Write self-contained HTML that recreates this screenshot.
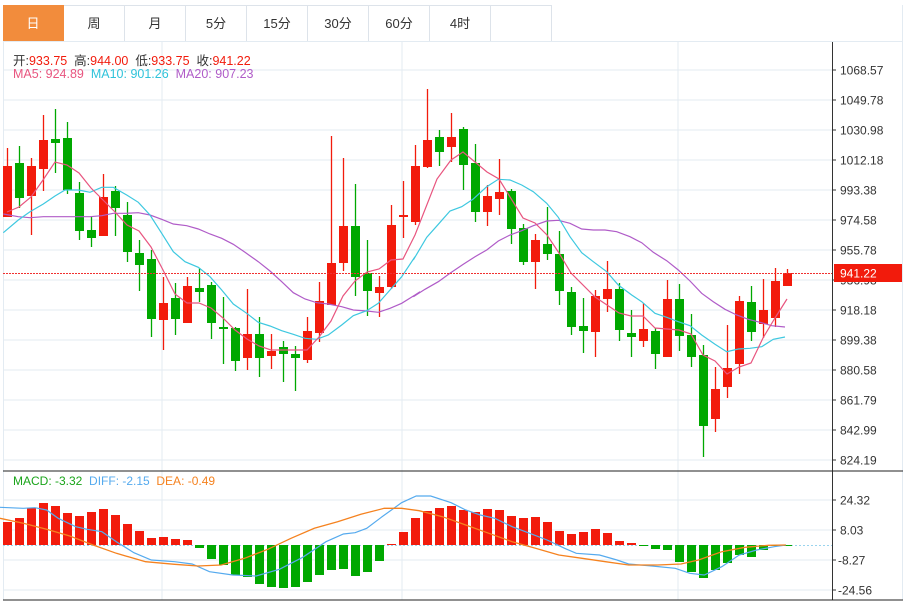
<!DOCTYPE html>
<html><head><meta charset="utf-8">
<style>
html,body{margin:0;padding:0;background:#fff;width:908px;height:602px;overflow:hidden;font-family:"Liberation Sans","Noto Sans CJK SC",sans-serif;}
#tabs{position:absolute;left:3px;top:5px;height:36px;}
.tab{position:absolute;top:0;width:61px;height:36px;border-right:1px solid #dde3ea;border-top:1px solid #dde3ea;box-sizing:border-box;text-align:center;line-height:35px;font-size:13px;color:#333;}
.on{background:#f28c3c;color:#fff;border-color:#f28c3c;}
svg{position:absolute;left:0;top:0;}
.info{position:absolute;left:13px;font-size:12.5px;white-space:pre;}
</style></head><body>
<div id="tabs">
<div class="tab on" style="left:0">日</div>
<div class="tab" style="left:61px">周</div>
<div class="tab" style="left:122px">月</div>
<div class="tab" style="left:183px">5分</div>
<div class="tab" style="left:244px">15分</div>
<div class="tab" style="left:305px">30分</div>
<div class="tab" style="left:366px">60分</div>
<div class="tab" style="left:427px">4时</div>
<div class="tab" style="left:488px">&nbsp;</div>
</div>
<svg id="s" width="908" height="602" xmlns="http://www.w3.org/2000/svg"></svg>
<div class="info" style="top:50px;color:#333">开:<span style="color:#f21b0c">933.75</span>  高:<span style="color:#f21b0c">944.00</span>  低:<span style="color:#f21b0c">933.75</span>  收:<span style="color:#f21b0c">941.22</span></div>
<div class="info" style="top:67px"><span style="color:#e8557f">MA5: 924.89</span>  <span style="color:#2fc3da">MA10: 901.26</span>  <span style="color:#b05cc8">MA20: 907.23</span></div>
<div class="info" style="top:474px;font-size:12px"><span style="color:#1aa41a">MACD: -3.32</span>  <span style="color:#55aaee">DIFF: -2.15</span>  <span style="color:#f5821f">DEA: -0.49</span></div>
<script>
var R='#f21b0c',G='#00a800';
var C=[[7,R,166,217,148,217],[19,G,163,198,146,208],[31,R,166,196,158,235],[43,R,140,169,115,191],[55,G,139,143,109,173],[67,G,138,190,122,194],[79,G,193,231,182,240],[91,G,230,238,216,247],[103,R,197,236,174,236],[115,G,191,208,186,236],[127,G,215,252,202,262],[139,G,253,265,240,291],[151,G,259,319,250,337],[163,R,303,320,277,350],[175,G,298,319,283,335],[187,R,286,323,277,323],[199,G,288,292,268,302],[211,G,285,323,282,339],[223,G,327,329,297,364],[235,G,328,361,327,371],[247,R,334,358,289,370],[259,G,334,358,317,377],[271,R,351,356,334,369],[283,G,347,354,341,382],[295,G,354,358,346,391],[307,R,331,360,317,363],[319,R,301,333,282,342],[331,R,263,305,136,305],[343,R,226,263,158,271],[355,G,226,277,184,296],[367,G,273,291,240,316],[379,R,287,293,276,317],[391,R,225,287,205,289],[403,R,215,217,181,238],[415,R,166,222,145,225],[427,R,140,167,89,168],[439,G,137,152,130,166],[451,R,137,147,113,162],[463,G,129,165,127,190],[475,G,163,212,144,222],[487,R,196,212,185,226],[499,R,192,199,159,215],[511,G,191,229,189,244],[523,G,228,262,224,265],[535,R,240,262,234,289],[547,G,244,254,207,260],[559,G,254,291,231,305],[571,G,292,327,287,335],[583,G,326,331,298,353],[595,R,296,332,290,357],[607,R,289,299,261,312],[619,G,289,330,283,341],[631,G,333,337,310,357],[643,R,329,341,303,347],[655,G,331,354,328,369],[667,R,299,357,280,357],[679,G,299,336,284,351],[691,G,335,357,314,367],[703,G,355,426,345,457],[715,R,389,419,367,432],[727,R,368,387,325,398],[739,R,301,364,296,374],[751,G,302,332,286,341],[763,R,310,324,279,338],[775,R,281,318,268,327],[787,R,273,286,269,286]];
var M=[522,518,508,503,506,513,516,512,509,515,524,531,538,537,539,540,548,559,565,575,577,584,587,588,587,582,575,570,569,576,572,561,544,532,518,511,508,506,510,512,509,510,516,518,517,522,531,534,532,529,533,541,543,546,549,550,562,572,578,570,563,555,557,550,546,545.5];
function pts(a,dx,dy,sx,sy){var o=[];for(var i=0;i<a.length;i+=2)o.push((dx+a[i]/sx).toFixed(1)+','+(dy+a[i+1]/sy).toFixed(1));return o.join(' ');}
var h='';
var gy=[70,100,130,160,190,220,250,280,310,340,370,400,430,460];
gy.forEach(function(y){h+='<line x1="3" x2="832" y1="'+y+'" y2="'+y+'" stroke="#e3ebf2"/>';h+='<line x1="832" x2="836" y1="'+y+'" y2="'+y+'" stroke="#333"/>';});
[500,530,560,590].forEach(function(y){h+='<line x1="3" x2="832" y1="'+y+'" y2="'+y+'" stroke="#e3ebf2"/><line x1="832" x2="836" y1="'+y+'" y2="'+y+'" stroke="#333"/>';});
[162,402,678].forEach(function(x){h+='<line x1="'+x+'" x2="'+x+'" y1="42" y2="600" stroke="#e3ebf2"/>';});
h+='<line x1="3.5" x2="3.5" y1="42" y2="600" stroke="#e3ebf2"/>';
h+='<line x1="3" x2="903" y1="41.5" y2="41.5" stroke="#e3ebf2"/><line x1="902.5" x2="902.5" y1="5" y2="600" stroke="#e3ebf2"/>';
h+='<line x1="832.5" x2="832.5" y1="42" y2="600" stroke="#333"/>';
h+='<line x1="3" x2="903" y1="471" y2="471" stroke="#222"/><line x1="3" x2="903" y1="600" y2="600" stroke="#222"/>';
var L=['1068.57','1049.78','1030.98','1012.18','993.38','974.58','955.78','936.98','918.18','899.38','880.58','861.79','842.99','824.19'];
L.forEach(function(t,i){h+='<text x="840" y="'+(gy[i]+4.5)+'" font-size="12" fill="#333" font-family="Liberation Sans">'+t+'</text>';});
['24.32','8.03','-8.27','-24.56'].forEach(function(t,i){h+='<text x="'+(t[0]=='-'?838:840)+'" y="'+(504.5+30*i)+'" font-size="12" fill="#333" font-family="Liberation Sans">'+t+'</text>';});
C.forEach(function(c){h+='<line x1="'+c[0]+'.5" x2="'+c[0]+'.5" y1="'+c[4]+'" y2="'+c[5]+'" stroke="'+c[1]+'" stroke-width="1.3"/>';h+='<rect x="'+(c[0]-4)+'" y="'+c[2]+'" width="9" height="'+Math.max(2,c[3]-c[2])+'" fill="'+c[1]+'"/>';});
h+='<polyline fill="none" stroke="#b05cc8" stroke-width="1.2" points="'+pts([10,402,55,410,90,413,130,410,200,410,270,410,305,407,340,400,380,400,415,398,450,405,485,418,520,432,560,437,595,447,630,462,665,475,700,493,735,517,775,545,810,573,845,605,880,638,915,657,950,668,985,672,1025,680,1060,690,1100,693,1135,697,1170,685,1205,670,1245,645,1260,635],0,80,3,3)+' '+pts([40,650,75,628,115,605,150,580,190,553,225,530,260,510,295,483,330,465,365,452,400,437,440,423,475,421,510,430,545,447,580,450,615,450,650,455,690,470,725,488,760,517,800,542,835,570,870,603,905,640,940,665,975,688,1010,705,1045,718,1080,727,1115,737,1155,741],400,80,3,3)+'"/>';
h+='<polyline fill="none" stroke="#3ec8e0" stroke-width="1.2" points="'+pts([10,458,55,420,90,395,130,372,165,348,195,330,235,330,270,337,305,322,340,322,380,345,415,367,450,405,485,460,520,515,555,545,595,562,630,590,665,630,700,672,740,700,775,727,810,738,845,752,880,763,915,775,950,778,985,765,1025,735,1060,707,1100,692,1135,670,1170,630,1205,590,1245,530],0,80,3,3)+' '+pts([40,540,80,472,115,433,150,393,185,380,220,357,260,320,295,298,330,300,365,315,400,335,440,370,475,412,510,470,545,518,580,545,620,575,655,615,695,645,725,665,765,700,800,712,835,725,870,737,905,765,945,793,980,815,1015,807,1050,805,1085,800,1120,778,1155,771],400,80,3,3)+'"/>';
var m5=[[7,212],[19,207],[31,197],[43,180],[55,162],[67,165],[79,173],[91,188],[103,200],[115,212],[127,225],[139,231],[151,247],[163,270],[175,294],[187,303],[199,303],[211,308],[223,318],[235,330],[247,339],[259,346],[271,350],[283,350],[295,350],[307,350],[319,337],[331,321],[343,296],[355,281],[367,272],[379,269],[391,260],[403,259],[415,235],[437,179],[451,160],[463,152],[487,172],[499,179],[523,218],[535,223],[547,235],[559,253],[571,273],[595,297],[607,305],[619,313],[631,316],[643,316],[655,328],[679,330],[691,334],[703,355],[715,361],[727,374],[739,367],[751,363],[763,338],[775,318],[787,299]];
h+='<polyline fill="none" stroke="#e8557f" stroke-width="1.2" points="'+m5.map(function(p){return p.join(',')}).join(' ')+'"/>';
h+='<line x1="3" x2="832" y1="273.5" y2="273.5" stroke="#f03030" stroke-width="1" stroke-dasharray="2,1"/>';
h+='<rect x="834" y="264" width="68" height="18" fill="#f21b0c"/><text x="840" y="277.5" font-size="12" fill="#fff" font-family="Liberation Sans">941.22</text>';
h+='<line x1="3" x2="832" y1="545.5" y2="545.5" stroke="#9ad4ee" stroke-dasharray="2,2"/>';
M.forEach(function(v,i){var x=C[i][0];var c=v<545?R:G;var y=Math.min(v,545),hh=Math.max(1,Math.abs(v-545));h+='<rect x="'+(x-4)+'" y="'+y+'" width="9" height="'+hh+'" fill="'+c+'"/>';});
h+='<polyline fill="none" stroke="#55aaee" stroke-width="1.2" points="'+pts([0,142,40,145,60,143,80,150,100,175,130,200,150,208,175,215,200,245,230,278,260,300,300,305,330,312,360,335,400,345,440,348,480,328,520,292,560,245,590,222,610,218,630,205,655,172,690,128,715,108,740,108,775,128,800,150,825,165,850,175,880,200,910,220,940,240,970,265,990,280,1030,285,1060,300,1080,312,1120,318,1160,325,1185,340,1210,345,1240,320,1270,285,1300,270,1330,260,1350,255],0,460,1.718,3)+'"/>';
h+='<polyline fill="none" stroke="#f5821f" stroke-width="1.3" points="'+pts([0,175,40,190,80,208,120,228,160,255,200,280,250,305,300,313,340,318,380,315,420,295,460,268,500,235,540,205,580,185,620,163,660,145,690,145,720,152,760,170,800,195,840,220,880,245,920,265,960,285,1000,295,1040,305,1080,315,1130,315,1170,312,1200,300,1240,275,1280,262,1320,256,1350,255],0,460,1.718,3)+'"/>';
document.getElementById('s').innerHTML=h;
</script>
</body></html>
